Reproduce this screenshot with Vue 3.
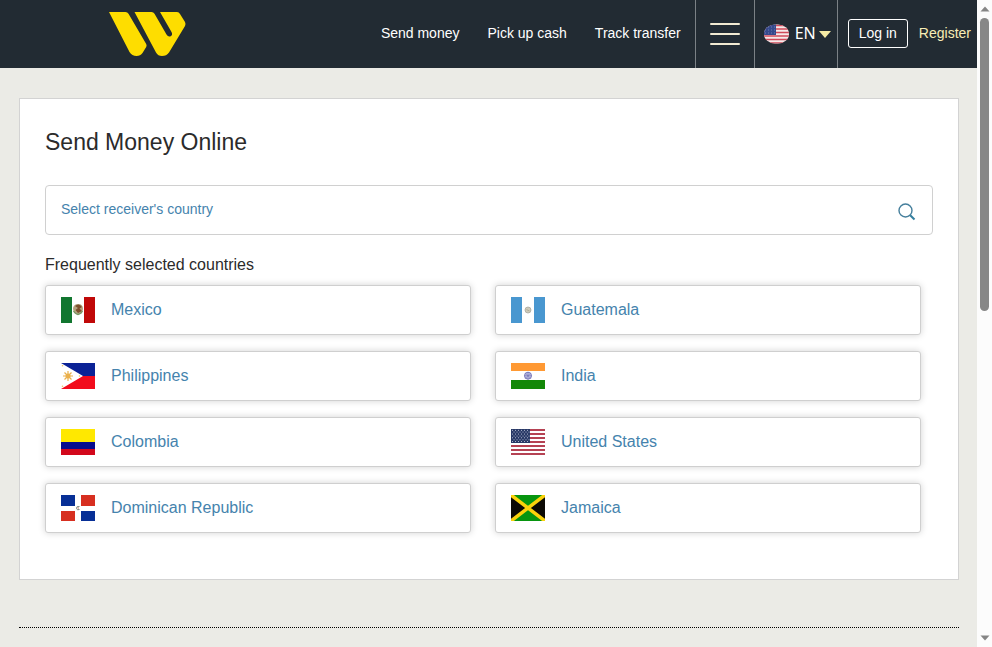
<script setup>
const countries = [
  { code: 'mx', name: 'Mexico' },
  { code: 'gt', name: 'Guatemala' },
  { code: 'ph', name: 'Philippines' },
  { code: 'in', name: 'India' },
  { code: 'co', name: 'Colombia' },
  { code: 'us', name: 'United States' },
  { code: 'do', name: 'Dominican Republic' },
  { code: 'jm', name: 'Jamaica' },
]
const stars = []
for (let r = 0; r < 7; r++) {
  for (let c = 0; c < 6; c++) stars.push({ x: 1.5 + c * 3 + (r % 2) * 1.5, y: 1.2 + r * 1.9 })
}
</script>

<template>
  <div class="shell">
    <div class="page">
      <header class="topbar">
        <a class="logo" href="#" aria-label="Home">
          <svg width="78" height="46" viewBox="0 0 78 46" aria-hidden="true">
            <path d="M1 1H17.500Q19.500 1 20.500 2.800L38.200 33Q39 34.500 38.200 36L34.500 42Q32.500 45 28.500 45Q24 45 21.500 41Z" fill="#fedd00" />
            <path d="M26.500 1H43.500Q45.500 1 46.500 2.800L58.500 23.500Q60.300 26.500 62.700 25.200Q65 23.800 63.500 21L52 1H69Q71 1 72 3L77 11Q78 13 77 15L61 41.500Q58.500 45 54 45Q50 45 48 41.500Z" fill="#fedd00" />
          </svg>
        </a>
        <nav class="links">
          <a href="#">Send money</a>
          <a href="#">Pick up cash</a>
          <a href="#">Track transfer</a>
        </nav>
        <button class="menu" type="button" aria-label="Menu">
          <span class="bar"></span><span class="bar"></span><span class="bar"></span>
        </button>
        <button class="lang" type="button">
          <svg width="26" height="20" viewBox="0 0 26 20" aria-hidden="true">
            <defs><clipPath id="oval"><rect x="1" y="0.500" width="25" height="19" rx="11" ry="9.500" /></clipPath></defs>
            <g clip-path="url(#oval)">
              <rect width="26" height="20" fill="#f5e9e9" />
              <path d="M0 1.500H26M0 5H26M0 8.500H26M0 12H26M0 15.500H26M0 19H26" stroke="#cf4a5a" stroke-width="1.700" />
              <rect width="13" height="11" fill="#35498c" />
              <path d="M2 3H12M2 6H12M2 9H12" stroke="#8794bd" stroke-width="0.700" stroke-dasharray="1 2" />
            </g>
          </svg>
          <span class="code">EN</span>
          <svg width="12" height="7" viewBox="0 0 12 7" aria-hidden="true"><path d="M0 0H12L6 7Z" fill="#f5eba5" /></svg>
        </button>
        <div class="account">
          <a class="login" href="#">Log in</a>
          <a class="register" href="#">Register</a>
        </div>
      </header>

      <main>
        <section class="panel">
          <h1>Send Money Online</h1>
          <div class="search">
            <input type="text" placeholder="Select receiver's country" aria-label="Select receiver's country" />
            <svg width="18" height="18" viewBox="0 0 18 18" fill="none" aria-hidden="true">
              <circle cx="7.500" cy="7.500" r="6.500" stroke="#457f9c" stroke-width="1.400" />
              <path d="M12.200 12.200L16.500 16.500" stroke="#337f9f" stroke-width="2" />
            </svg>
          </div>
          <h2>Frequently selected countries</h2>
          <div class="grid">
            <a v-for="c in countries" :key="c.code" class="country" href="#">
              <svg width="34" height="26" viewBox="0 0 34 26" aria-hidden="true">
                <template v-if="c.code === 'mx'">
                  <rect width="34" height="26" fill="#fff" />
                  <rect width="11" height="26" fill="#11762f" />
                  <rect x="23" width="11" height="26" fill="#c00808" />
                  <path d="M12 11Q13 7 17 7Q22 7 22 12Q22 15 20 17L15 17Q12 15 12 11Z" fill="#b5a27f" />
                  <path d="M14 9Q18 5.500 21 10L18.500 11.500L21 14L17 16L14.500 13L17 11Z" fill="#7d4f2c" />
                  <path d="M12.500 14Q17 21 21.500 14" fill="none" stroke="#789665" stroke-width="1.300" />
                </template>
                <template v-else-if="c.code === 'gt'">
                  <rect width="34" height="26" fill="#fff" />
                  <rect width="11" height="26" fill="#4997d0" />
                  <rect x="23" width="11" height="26" fill="#4997d0" />
                  <circle cx="17" cy="13" r="3" fill="#cfcab9" stroke="#a8aaa0" stroke-width="0.800" />
                  <path d="M15.500 12.500L18.500 14" stroke="#a9a58e" stroke-width="0.800" />
                </template>
                <template v-else-if="c.code === 'ph'">
                  <rect width="34" height="13" fill="#0b2296" />
                  <rect y="13" width="34" height="13" fill="#f20c1c" />
                  <path d="M0 0L22 13L0 26Z" fill="#fff" />
                  <circle cx="7" cy="13" r="2.500" fill="#eab04b" />
                  <path d="M7 8V18M2 13H12M3.500 9.500L10.500 16.500M10.500 9.500L3.500 16.500" stroke="#eab04b" stroke-width="1.200" />
                  <circle cx="1.500" cy="2.800" r="0.800" fill="#efc45f" />
                  <circle cx="1.500" cy="23.200" r="0.800" fill="#efc45f" />
                  <circle cx="18.500" cy="13" r="0.800" fill="#efc45f" />
                </template>
                <template v-else-if="c.code === 'in'">
                  <rect width="34" height="26" fill="#fff" />
                  <rect width="34" height="8" fill="#ff9933" />
                  <rect y="17" width="34" height="9" fill="#138808" />
                  <circle cx="17" cy="12.700" r="3.500" fill="#c8c8e8" stroke="#7676b8" stroke-width="1" />
                  <path d="M17 9V16.400M13.300 12.700H20.700M14.400 10.100L19.600 15.300M19.600 10.100L14.400 15.300" stroke="#7676b8" stroke-width="0.700" />
                </template>
                <template v-else-if="c.code === 'co'">
                  <rect width="34" height="13" fill="#ffe800" />
                  <rect y="13" width="34" height="7" fill="#070c8d" />
                  <rect y="20" width="34" height="6" fill="#d2071b" />
                </template>
                <template v-else-if="c.code === 'us'">
                  <rect width="34" height="26" fill="#fff" />
                  <path d="M0 1H34M0 5H34M0 9H34M0 13H34M0 17H34M0 21H34M0 25H34" stroke="#b54253" stroke-width="2" />
                  <rect width="19" height="14" fill="#293967" />
                  <circle v-for="(s, i) in stars" :key="i" :cx="s.x" :cy="s.y" r="0.500" fill="#d7dceb" />
                </template>
                <template v-else-if="c.code === 'do'">
                  <rect width="34" height="26" fill="#fff" />
                  <path d="M0 0H14V11H0ZM20 16H34V26H20Z" fill="#072f96" />
                  <path d="M20 0H34V11H20ZM0 16H14V26H0Z" fill="#d72f20" />
                  <path d="M18.500 11.500Q15 11 15.500 13.500Q16 15.500 18.500 14.500" fill="none" stroke="#788980" stroke-width="1" />
                  <path d="M16.500 13H18" stroke="#bf7366" stroke-width="1" />
                </template>
                <template v-else>
                  <rect width="34" height="26" fill="#0c0a05" />
                  <path d="M0 0H34L17 13ZM0 26H34L17 13Z" fill="#07950f" />
                  <path d="M0 0L34 26M34 0L0 26" stroke="#fbd20b" stroke-width="3.500" />
                </template>
              </svg>
              <span>{{ c.name }}</span>
            </a>
          </div>
        </section>
        <hr class="rule" />
      </main>
    </div>

    <div class="scrollbar" aria-hidden="true">
      <svg width="10" height="6" viewBox="0 0 10 6"><path d="M0.500 5.500L5 0.500L9.500 5.500Z" fill="#858585" /></svg>
      <div class="track"><div class="thumb"></div></div>
      <svg width="10" height="6" viewBox="0 0 10 6"><path d="M0.500 0.500L5 5.500L9.500 0.500Z" fill="#858585" /></svg>
    </div>
  </div>
</template>

<style>
body {
  margin: 0;
  background: #ebebe6;
}
</style>

<style scoped>
.shell {
  display: flex;
  min-height: 100vh;
  font-family: "Liberation Sans", Arial, sans-serif;
  font-size: 14px;
  color: #2b2b2b;
}
.shell *,
.shell {
  box-sizing: border-box;
}
.page {
  flex: 1;
  min-width: 0;
  background: #ebebe6;
}
a {
  color: inherit;
  text-decoration: none;
}
button {
  font: inherit;
  color: inherit;
  background: none;
  border: 0;
  padding: 0;
}
.topbar {
  display: flex;
  align-items: stretch;
  height: 68px;
  background: #222b33;
  color: #fff;
}
.logo {
  display: flex;
  align-items: center;
  margin-right: auto;
  padding-left: 108px;
}
.links {
  display: flex;
  align-items: center;
  gap: 28px;
  padding: 0 14px 2px;
}
.menu {
  display: flex;
  flex-direction: column;
  align-items: center;
  justify-content: center;
  gap: 8px;
  width: 59px;
  border-left: 1px solid #7b8186;
}
.bar {
  width: 30px;
  height: 2px;
  border-radius: 1px;
  background: #f2ead2;
}
.lang {
  display: flex;
  align-items: center;
  width: 83px;
  padding-left: 8px;
  border-left: 1px solid #7b8186;
}
.code {
  margin: 0 3px 3px 6px;
  font-family: "Noto Sans", sans-serif;
  font-size: 16px;
}
.account {
  display: flex;
  align-items: center;
  gap: 11px;
  padding: 0 6px 2px 10px;
  border-left: 1px solid #7b8186;
}
.login {
  padding: 0 10px;
  line-height: 27px;
  border: 1px solid #fff;
  border-radius: 3px;
}
.register {
  color: #f8edb5;
}
main {
  padding: 30px 18px 18px 19px;
}
.panel {
  padding: 28px 25px 46px;
  background: #fff;
  border: 1px solid #d3d3d3;
}
h1 {
  margin: 0 0 28px;
  font-size: 23px;
  line-height: 30px;
  font-weight: 400;
}
.search {
  display: flex;
  align-items: center;
  height: 50px;
  padding-right: 16px;
  border: 1px solid #d0d0d0;
  border-radius: 4px;
}
.search svg {
  margin-top: 4px;
}
.search input {
  flex: 1;
  min-width: 0;
  height: 100%;
  padding: 0 15px 2px;
  font: inherit;
  color: #4583ad;
  background: none;
  border: 0;
  outline: 0;
}
.search input::placeholder {
  color: #4583ad;
  opacity: 1;
}
h2 {
  margin: 20px 0 10px;
  font-size: 16px;
  line-height: 20px;
  font-weight: 400;
}
.grid {
  display: grid;
  grid-template-columns: 1fr 1fr;
  gap: 16px 24px;
  margin-right: 12px;
}
.country {
  display: flex;
  align-items: center;
  gap: 16px;
  height: 50px;
  padding: 0 15px;
  font-size: 16px;
  color: #4583ad;
  background: #fff;
  border: 1px solid #cfcfcf;
  border-radius: 3px;
  box-shadow: 0 0 7px rgba(0, 0, 0, 0.18);
}
.rule {
  margin: 47px 0 0;
  border: 0;
  border-top: 1px dotted #000;
}
.scrollbar {
  display: flex;
  flex-direction: column;
  align-items: center;
  width: 15px;
  padding: 6px 0;
  background: #fcfcfc;
}
.track {
  flex: 1;
  display: flex;
  padding: 6px 0;
}
.thumb {
  width: 9px;
  height: 48%;
  border-radius: 5px;
  background: #878787;
}
</style>
